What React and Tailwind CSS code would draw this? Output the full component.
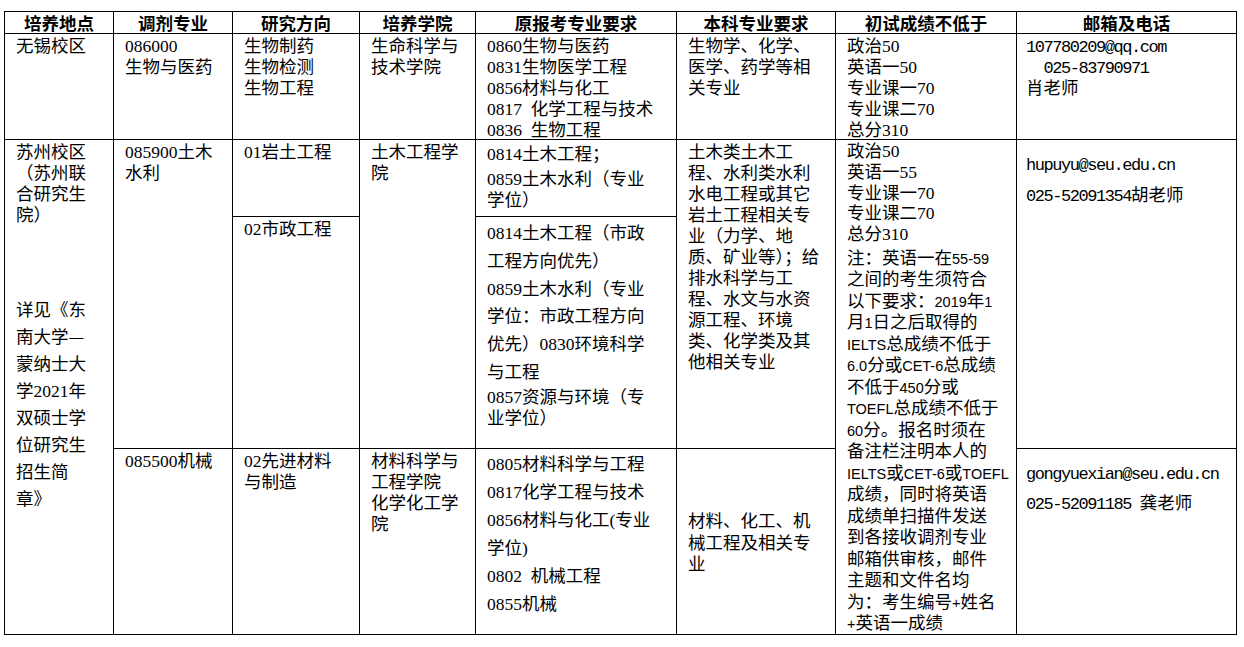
import React from "react";

// 半角字符：正文里的数字用衬线体，邮箱电话用等宽体，备注里的英文用无衬线体
const SERIF = "font-['Liberation_Serif',serif] text-[17.5px]";
const MONO = "font-['Liberation_Mono',monospace] text-[17px] tracking-[-1.45px]";
const CAL = "font-['Liberation_Sans',sans-serif] text-[14.5px]";

const TD = "border border-black align-top p-0 pl-[11px]";
const H21 = "h-[21px] leading-[21px]";
const H28 = "h-[27.8px] leading-[27.8px]";

function Txt({ s, lat = SERIF }) {
  return s
    .split(/([\x20-\x7e]+)/)
    .filter(Boolean)
    .map((p, i) =>
      /^[\x20-\x7e]+$/.test(p) ? (
        <span key={i} className={lat}>{p}</span>
      ) : (
        <span key={i}>{p}</span>
      )
    );
}

function Lines({ items, h = H21, lat }) {
  return items.map((s, i) => (
    <div key={i} className={`${h} whitespace-pre`}>
      <Txt s={s} lat={lat} />
    </div>
  ));
}

const HEAD = ["培养地点", "调剂专业", "研究方向", "培养学院", "原报考专业要求", "本科专业要求", "初试成绩不低于", "邮箱及电话"];
const WIDTHS = ["w-[109px]", "w-[119px]", "w-[127px]", "w-[116px]", "w-[201px]", "w-[159px]", "w-[181px]", "w-[220px]"];

const NOTE = [
  "注：英语一在55-59", "之间的考生须符合", "以下要求：2019年1", "月1日之后取得的",
  "IELTS总成绩不低于", "6.0分或CET-6总成绩", "不低于450分或", "TOEFL总成绩不低于",
  "60分。报名时须在", "备注栏注明本人的", "IELTS或CET-6或TOEFL", "成绩，同时将英语",
  "成绩单扫描件发送", "到各接收调剂专业", "邮箱供审核，邮件", "主题和文件名均",
  "为：考生编号+姓名", "+英语一成绩",
];

export default function App() {
  return (
    <div className="w-[1244px] h-[647px] overflow-hidden bg-white text-black text-[17.5px] font-['Noto_Sans_CJK_SC',sans-serif]">
      <table className="table-fixed w-[1233px] mt-[11px] ml-[4px]">
        <colgroup>
          {WIDTHS.map((w) => <col key={w} className={w} />)}
        </colgroup>
        <tbody>
          <tr className="h-[22px]">
            {HEAD.map((t) => (
              <th key={t} className="border border-black p-0 align-middle text-center font-bold leading-[21px]">{t}</th>
            ))}
          </tr>

          {/* 无锡校区 */}
          <tr className="h-[106px]">
            <td className={TD}><Lines items={["无锡校区"]} /></td>
            <td className={TD}><Lines items={["086000", "生物与医药"]} /></td>
            <td className={TD}><Lines items={["生物制药", "生物检测", "生物工程"]} /></td>
            <td className={TD}><Lines items={["生命科学与", "技术学院"]} /></td>
            <td className={TD}><Lines items={["0860生物与医药", "0831生物医学工程", "0856材料与化工", "0817\u2002化学工程与技术", "0836\u2002生物工程"]} /></td>
            <td className={TD}><Lines items={["生物学、化学、", "医学、药学等相", "关专业"]} /></td>
            <td className={TD}><Lines items={["政治50", "英语一50", "专业课一70", "专业课二70", "总分310"]} /></td>
            <td className="border border-black align-top p-0 pl-[9px]"><Lines lat={MONO} items={["107780209@qq.com", "  025-83790971", "肖老师"]} /></td>
          </tr>

          {/* 苏州校区 土木 */}
          <tr className="h-[77px]">
            <td rowSpan={3} className={TD}>
              <Lines items={["苏州校区", "（苏州联", "合研究生", "院）"]} />
              <div className="mt-[71px]">
                <Lines h="h-[27px] leading-[27px]" items={["详见《东", "南大学—", "蒙纳士大", "学2021年", "双硕士学", "位研究生", "招生简", "章》"]} />
              </div>
            </td>
            <td rowSpan={2} className={TD}><Lines items={["085900土木", "水利"]} /></td>
            <td className={TD}><Lines items={["01岩土工程"]} /></td>
            <td rowSpan={2} className={TD}><Lines items={["土木工程学", "院"]} /></td>
            <td className={`${TD} pt-[2px]`}>
              <Lines items={["0814土木工程；"]} />
              <div className="mt-[4px]"><Lines items={["0859土木水利（专业", "学位）"]} /></div>
            </td>
            <td rowSpan={2} className={TD}>
              <Lines items={["土木类土木工", "程、水利类水利", "水电工程或其它", "岩土工程相关专", "业（力学、地", "质、矿业等）；给", "排水科学与工", "程、水文与水资", "源工程、环境", "类、化学类及其", "他相关专业"]} />
            </td>
            <td rowSpan={3} className={TD}>
              <Lines h="h-[20.8px] leading-[20.8px]" items={["政治50", "英语一55", "专业课一70", "专业课二70", "总分310"]} />
              <div className="mt-[2px]">
                <Lines h="h-[21.5px] leading-[21.5px]" lat={CAL} items={NOTE} />
              </div>
            </td>
            <td rowSpan={2} className="border border-black align-top p-0 pl-[9px] pt-[11.5px]">
              <Lines lat={MONO} items={["hupuyu@seu.edu.cn"]} />
              <div className="mt-[10px]"><Lines lat={MONO} items={["025-52091354胡老师"]} /></div>
            </td>
          </tr>

          <tr className="h-[232px]">
            <td className={TD}><Lines items={["02市政工程"]} /></td>
            <td className={`${TD} pt-[1px]`}>
              <Lines h={H28} items={["0814土木工程（市政", "工程方向优先）", "0859土木水利（专业", "学位：市政工程方向", "优先）0830环境科学", "与工程"]} />
              <Lines items={["0857资源与环境（专", "业学位）"]} />
            </td>
          </tr>

          {/* 机械 */}
          <tr className="h-[186px]">
            <td className={TD}><Lines items={["085500机械"]} /></td>
            <td className={TD}><Lines items={["02先进材料", "与制造"]} /></td>
            <td className={TD}><Lines items={["材料科学与", "工程学院", "化学化工学", "院"]} /></td>
            <td className={TD}>
              <Lines h="h-[28px] leading-[28px]" items={["0805材料科学与工程", "0817化学工程与技术", "0856材料与化工(专业", "学位)", "0802\u2002机械工程", "0855机械"]} />
            </td>
            <td className="border border-black align-middle p-0 pl-[11px]">
              <Lines h="h-[21.5px] leading-[21.5px]" items={["材料、化工、机", "械工程及相关专", "业"]} />
            </td>
            <td className="border border-black align-top p-0 pl-[9px] pt-[11.5px]">
              <Lines lat={MONO} items={["gongyuexian@seu.edu.cn"]} />
              <div className="mt-[9px]"><Lines lat={MONO} items={["025-52091185 龚老师"]} /></div>
            </td>
          </tr>
        </tbody>
      </table>
    </div>
  );
}
